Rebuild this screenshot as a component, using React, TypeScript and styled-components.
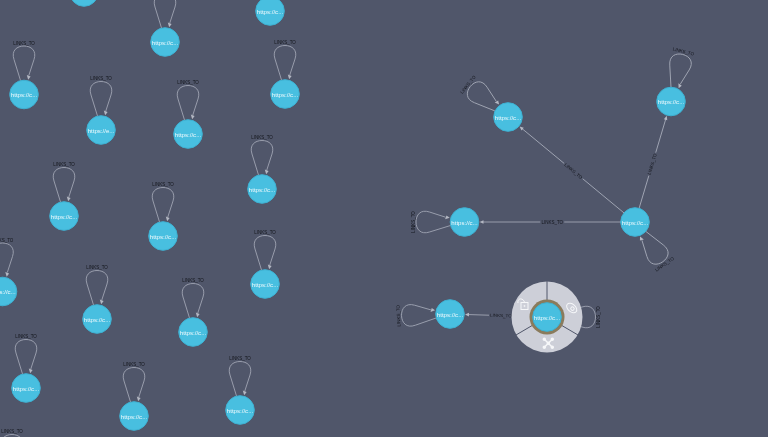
import styled, { createGlobalStyle } from 'styled-components'

const GlobalStyle = createGlobalStyle`
    html, body {
        margin: 0;
        padding: 0;
        background: #50566a;
        overflow: hidden;
    }
`

const Stage = styled.div`
    width: 768px;
    height: 437px;
    background: #50566a;
    overflow: hidden;
`

const Canvas = styled.svg`
    display: block;
    width: 768px;
    height: 437px;
    filter: blur(0.45px);
    font-family: 'Liberation Sans', Arial, sans-serif;
`

const Edge = styled.path`
    fill: none;
    stroke: #a0a5b3;
    stroke-width: 0.9;
`

const Arrow = styled.path`
    fill: #b4b8c3;
`

const EdgeLabel = styled.text`
    fill: #14161d;
    font-size: 4.5px;
    text-anchor: middle;
    dominant-baseline: central;
`

const NodeCircle = styled.circle`
    fill: #48bfe0;
    stroke: #3eb1d2;
    stroke-width: 1;
`

const NodeCaption = styled.text`
    fill: #f2fbfe;
    font-size: 6.1px;
    text-anchor: middle;
    dominant-baseline: central;
`

const Ring = styled.circle`
    fill: #cdcfd8;
`

const Halo = styled.circle`
    fill: #8a7b5c;
`

const Divider = styled.line`
    stroke: #50566a;
    stroke-width: 1;
`

const MenuIcon = styled.g`
    fill: none;
    stroke: #f6f7f9;
    stroke-width: 1;
`

const MenuIconFill = styled.g`
    fill: #f6f7f9;
    stroke: #f6f7f9;
    stroke-width: 1.5;
`

type GraphNode = {
    x: number
    y: number
    text: string
    // loop direction in degrees, clockwise from straight up
    loop?: number
    // extra label turn, for loops whose label is flipped
    labelTurn?: number
}

const nodes: GraphNode[] = [
    { x: 84, y: -8, text: 'https://c...' },
    { x: 165, y: 42, text: 'https://c...', loop: 0 },
    { x: 270, y: 11, text: 'https://c...' },
    { x: 24, y: 94.5, text: 'https://c...', loop: 0 },
    { x: 285, y: 94, text: 'https://c...', loop: 0 },
    { x: 101, y: 130, text: 'https://e...', loop: 0 },
    { x: 188, y: 134, text: 'https://c...', loop: 0 },
    { x: 262, y: 189, text: 'https://c...', loop: 0 },
    { x: 64, y: 216, text: 'https://c...', loop: 0 },
    { x: 163, y: 236, text: 'https://c...', loop: 0 },
    { x: 265, y: 284, text: 'https://c...', loop: 0 },
    { x: 2.5, y: 291.5, text: 'https://c...', loop: 0 },
    { x: 97, y: 319, text: 'https://c...', loop: 0 },
    { x: 193, y: 332, text: 'https://c...', loop: 0 },
    { x: 26, y: 388, text: 'https://c...', loop: 0 },
    { x: 134, y: 416, text: 'https://c...', loop: 0 },
    { x: 240, y: 410, text: 'https://c...', loop: 0 },
    { x: 12, y: 483, text: 'https://c...', loop: 0 },
    { x: 508, y: 117, text: 'https://c...', loop: -51 },
    { x: 671, y: 101.5, text: 'https://c...', loop: 14 },
    { x: 464.5, y: 222, text: 'https://c...', loop: -90 },
    { x: 635, y: 222, text: 'https://c...', loop: 145, labelTurn: 180 },
    { x: 450, y: 314, text: 'https://c...', loop: -92 },
    { x: 547, y: 317, text: 'https://c...', loop: 90, labelTurn: 180 },
]

const links = [
    { from: [635, 222], to: [508, 117] },
    { from: [635, 222], to: [671, 101.5] },
    { from: [635, 222], to: [464.5, 222] },
    { from: [547, 317], to: [450, 314] },
]

function StraightLink({ from, to }: { from: number[]; to: number[] }) {
    const dx = to[0] - from[0]
    const dy = to[1] - from[1]
    const length = Math.hypot(dx, dy)
    const angle = (Math.atan2(dy, dx) * 180) / Math.PI
    const mid = length / 2 - 2.5
    // keep the text upright
    const flip = Math.abs(angle) > 90 ? 180 : 0

    return (
        <g transform={`translate(${from[0]} ${from[1]}) rotate(${angle})`}>
            <Edge d={`M14 0 L${mid - 12} 0 M${mid + 12} 0 L${length - 18} 0`} />
            <Arrow
                d={`M${length - 19} -1.8 L${length - 15} 0 L${length - 19} 1.8 Z`}
            />
            <EdgeLabel transform={`translate(${mid} 0) rotate(${flip})`}>
                LINKS_TO
            </EdgeLabel>
        </g>
    )
}

function SelfLoop({ node }: { node: GraphNode }) {
    // labels above the top edge are not in the picture
    const labelOnCanvas = node.loop !== 0 || node.y > 50

    return (
        <g transform={`translate(${node.x} ${node.y}) rotate(${node.loop})`}>
            <Edge d="M-3.5 -14 L-10 -35 C-13 -44 -7 -48.5 0 -48.5 C7 -48.5 13 -44 10 -35 L4.8 -19" />
            <Arrow d="M2.8 -19.4 L6.6 -18 L4.2 -14.8 Z" />
            {labelOnCanvas && (
                <EdgeLabel
                    transform={`translate(0 -51.5) rotate(${node.labelTurn ?? 0})`}
                >
                    LINKS_TO
                </EdgeLabel>
            )}
        </g>
    )
}

function NodeMenu() {
    return (
        <g transform="translate(547 317)">
            <Ring r={35.5} />
            <Divider x1={0} y1={-36} x2={0} y2={-17} />
            <Divider x1={31} y1={18} x2={14} y2={8} />
            <Divider x1={-31} y1={18} x2={-14} y2={8} />
            <Halo r={17.5} />
            <MenuIcon transform="translate(-23 -11)">
                <rect x={-3} y={-3.5} width={7} height={7} />
                <path d="M-6 -3 C-7 -7.5 -1.5 -9 0.5 -4" />
                <circle cx={0.5} cy={0} r={0.6} />
            </MenuIcon>
            <MenuIcon transform="translate(24.7 -9) rotate(40)" strokeWidth={1.3}>
                <ellipse cx={0} cy={0} rx={5.8} ry={3.8} />
                <circle cx={1} cy={0} r={1.7} />
            </MenuIcon>
            <MenuIconFill transform="translate(1.3 26.3)">
                <path d="M-4 -4 L4 4 M4 -4 L-4 4" />
                <circle cx={-4} cy={-4} r={1} />
                <circle cx={4} cy={-4} r={1} />
                <circle cx={-4} cy={4} r={1} />
                <circle cx={4} cy={4} r={1} />
                <circle r={1} />
            </MenuIconFill>
        </g>
    )
}

export default function App() {
    return (
        <Stage>
            <GlobalStyle />
            <Canvas viewBox="0 0 768 437">
                {nodes
                    .filter((node) => node.loop !== undefined)
                    .map((node) => (
                        <SelfLoop key={`${node.x}-${node.y}`} node={node} />
                    ))}
                {links.map((link) => (
                    <StraightLink
                        key={`${link.to[0]}-${link.to[1]}`}
                        from={link.from}
                        to={link.to}
                    />
                ))}
                <NodeMenu />
                {nodes
                    .filter((node) => node.y < 437)
                    .map((node) => (
                        <g
                            key={`${node.x}-${node.y}`}
                            transform={`translate(${node.x} ${node.y})`}
                        >
                            <NodeCircle r={14.3} />
                            {node.y > 0 && <NodeCaption>{node.text}</NodeCaption>}
                        </g>
                    ))}
            </Canvas>
        </Stage>
    )
}
